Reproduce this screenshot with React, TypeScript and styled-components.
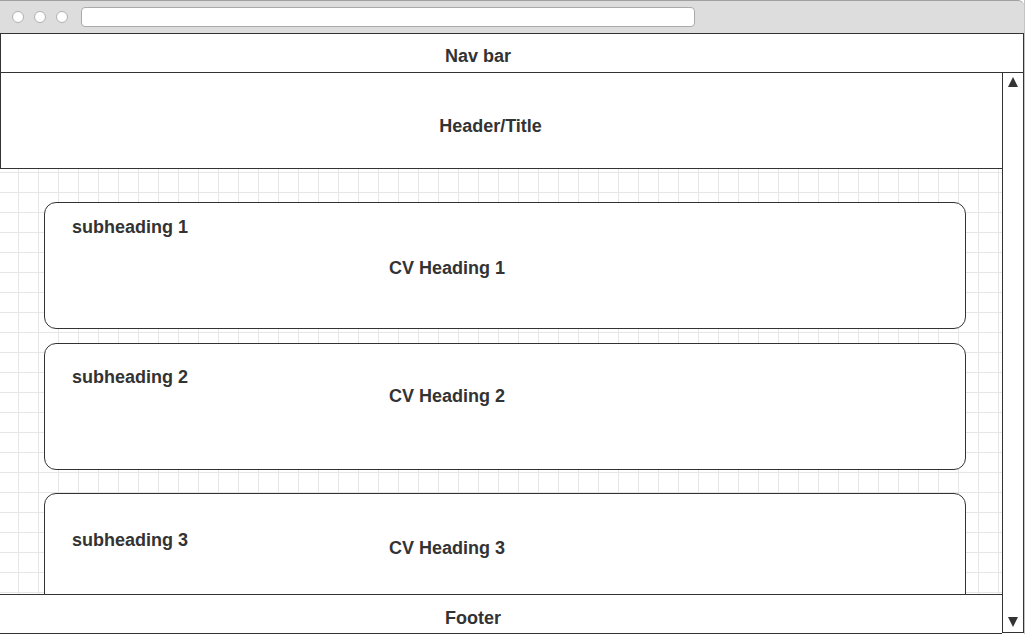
import styled, { createGlobalStyle } from 'styled-components'

const GlobalStyle = createGlobalStyle`
  html, body {
    margin: 0;
    padding: 0;
    background: #ffffff;
  }
  body {
    font-family: 'Liberation Sans', Arial, sans-serif;
  }
`

type CardSpec = {
  sub: string
  title: string
  offset: number
  padTop: number
  titleDrop: number
}

const cards: CardSpec[] = [
  { sub: 'subheading 1', title: 'CV Heading 1', offset: 33, padTop: 14, titleDrop: 41 },
  { sub: 'subheading 2', title: 'CV Heading 2', offset: 14, padTop: 23, titleDrop: 19 },
  { sub: 'subheading 3', title: 'CV Heading 3', offset: 23, padTop: 36, titleDrop: 8 },
]

const App = () => {
  return (
    <>
      <GlobalStyle />
      <Window>
        <Chrome>
          <Dot />
          <Dot />
          <Dot />
          <UrlBar />
        </Chrome>
        <NavBar>Nav bar</NavBar>
        <Body>
          <Main>
            <Header>Header/Title</Header>
            <Canvas>
              {cards.map((c) => (
                <Card key={c.sub} $offset={c.offset} $padTop={c.padTop}>
                  <Subheading>{c.sub}</Subheading>
                  <CvHeading $drop={c.titleDrop}>{c.title}</CvHeading>
                </Card>
              ))}
            </Canvas>
            <Footer>Footer</Footer>
          </Main>
          <Scrollbar>
            <Arrow $up />
            <Arrow />
          </Scrollbar>
        </Body>
      </Window>
    </>
  )
}

export default App

const Window = styled.div`
  width: 1024px;
  height: 634px;
  display: flex;
  flex-direction: column;
  overflow: hidden;
  border-right: 1px solid #c4c4c4;
  color: #333333;
  font-size: 18px;
  font-weight: 700;
`

const Chrome = styled.div`
  height: 33px;
  box-sizing: border-box;
  flex-shrink: 0;
  display: flex;
  align-items: center;
  gap: 10px;
  padding-left: 12px;
  background: #dddddd;
  border-top: 1px solid #a0a0a0;
  border-radius: 0 6px 0 0;
`

const Dot = styled.div`
  width: 12px;
  height: 12px;
  box-sizing: border-box;
  border-radius: 50%;
  background: #ffffff;
  border: 1px solid #b0b0b0;
`

const UrlBar = styled.div`
  width: 614px;
  height: 20px;
  box-sizing: border-box;
  margin-left: 3px;
  background: #ffffff;
  border: 1px solid #aaaaaa;
  border-radius: 4px;
`

const NavBar = styled.div`
  height: 40px;
  box-sizing: border-box;
  flex-shrink: 0;
  display: flex;
  align-items: center;
  justify-content: center;
  padding: 6px 68px 0 0;
  border: 1px solid #333333;
`

const Body = styled.div`
  flex: 1;
  min-height: 0;
  display: flex;
`

const Main = styled.div`
  flex: 1;
  min-width: 0;
  display: flex;
  flex-direction: column;
`

const Header = styled.div`
  height: 96px;
  box-sizing: border-box;
  flex-shrink: 0;
  display: flex;
  align-items: center;
  justify-content: center;
  padding: 12px 22px 0 0;
  border-left: 1px solid #333333;
  border-bottom: 1px solid #333333;
`

const Canvas = styled.div`
  flex: 1;
  min-height: 0;
  overflow: hidden;
  padding-left: 44px;
  background-color: #ffffff;
  background-image: linear-gradient(to right, #e6e6e6 1px, transparent 1px),
    linear-gradient(to bottom, #e6e6e6 1px, transparent 1px);
  background-size: 20px 20px;
  background-position: 18px 3px;
`

const Card = styled.div<{ $offset: number; $padTop: number }>`
  width: 922px;
  height: 127px;
  box-sizing: border-box;
  margin-top: ${({ $offset }) => $offset}px;
  padding: ${({ $padTop }) => $padTop}px 27px 0;
  display: flex;
  align-items: flex-start;
  background: #ffffff;
  border: 1px solid #333333;
  border-radius: 12px;
`

const Subheading = styled.div`
  width: 317px;
  flex-shrink: 0;
  line-height: 20px;
`

const CvHeading = styled.div<{ $drop: number }>`
  margin-top: ${({ $drop }) => $drop}px;
  line-height: 20px;
`

const Footer = styled.div`
  height: 40px;
  box-sizing: border-box;
  flex-shrink: 0;
  display: flex;
  align-items: center;
  justify-content: center;
  padding: 8px 56px 0 0;
  background: #ffffff;
  border-top: 1px solid #333333;
  border-bottom: 1px solid #333333;
`

const Scrollbar = styled.div`
  width: 22px;
  box-sizing: border-box;
  flex-shrink: 0;
  display: flex;
  flex-direction: column;
  justify-content: space-between;
  align-items: center;
  padding: 4px 0 5px;
  margin-bottom: 1px;
  border: 1px solid #333333;
  border-top: none;
`

const Arrow = styled.div<{ $up?: boolean }>`
  width: 0;
  height: 0;
  border-left: 5px solid transparent;
  border-right: 5px solid transparent;
  ${({ $up }) =>
    $up ? 'border-bottom: 10px solid #333333;' : 'border-top: 10px solid #333333;'}
`
